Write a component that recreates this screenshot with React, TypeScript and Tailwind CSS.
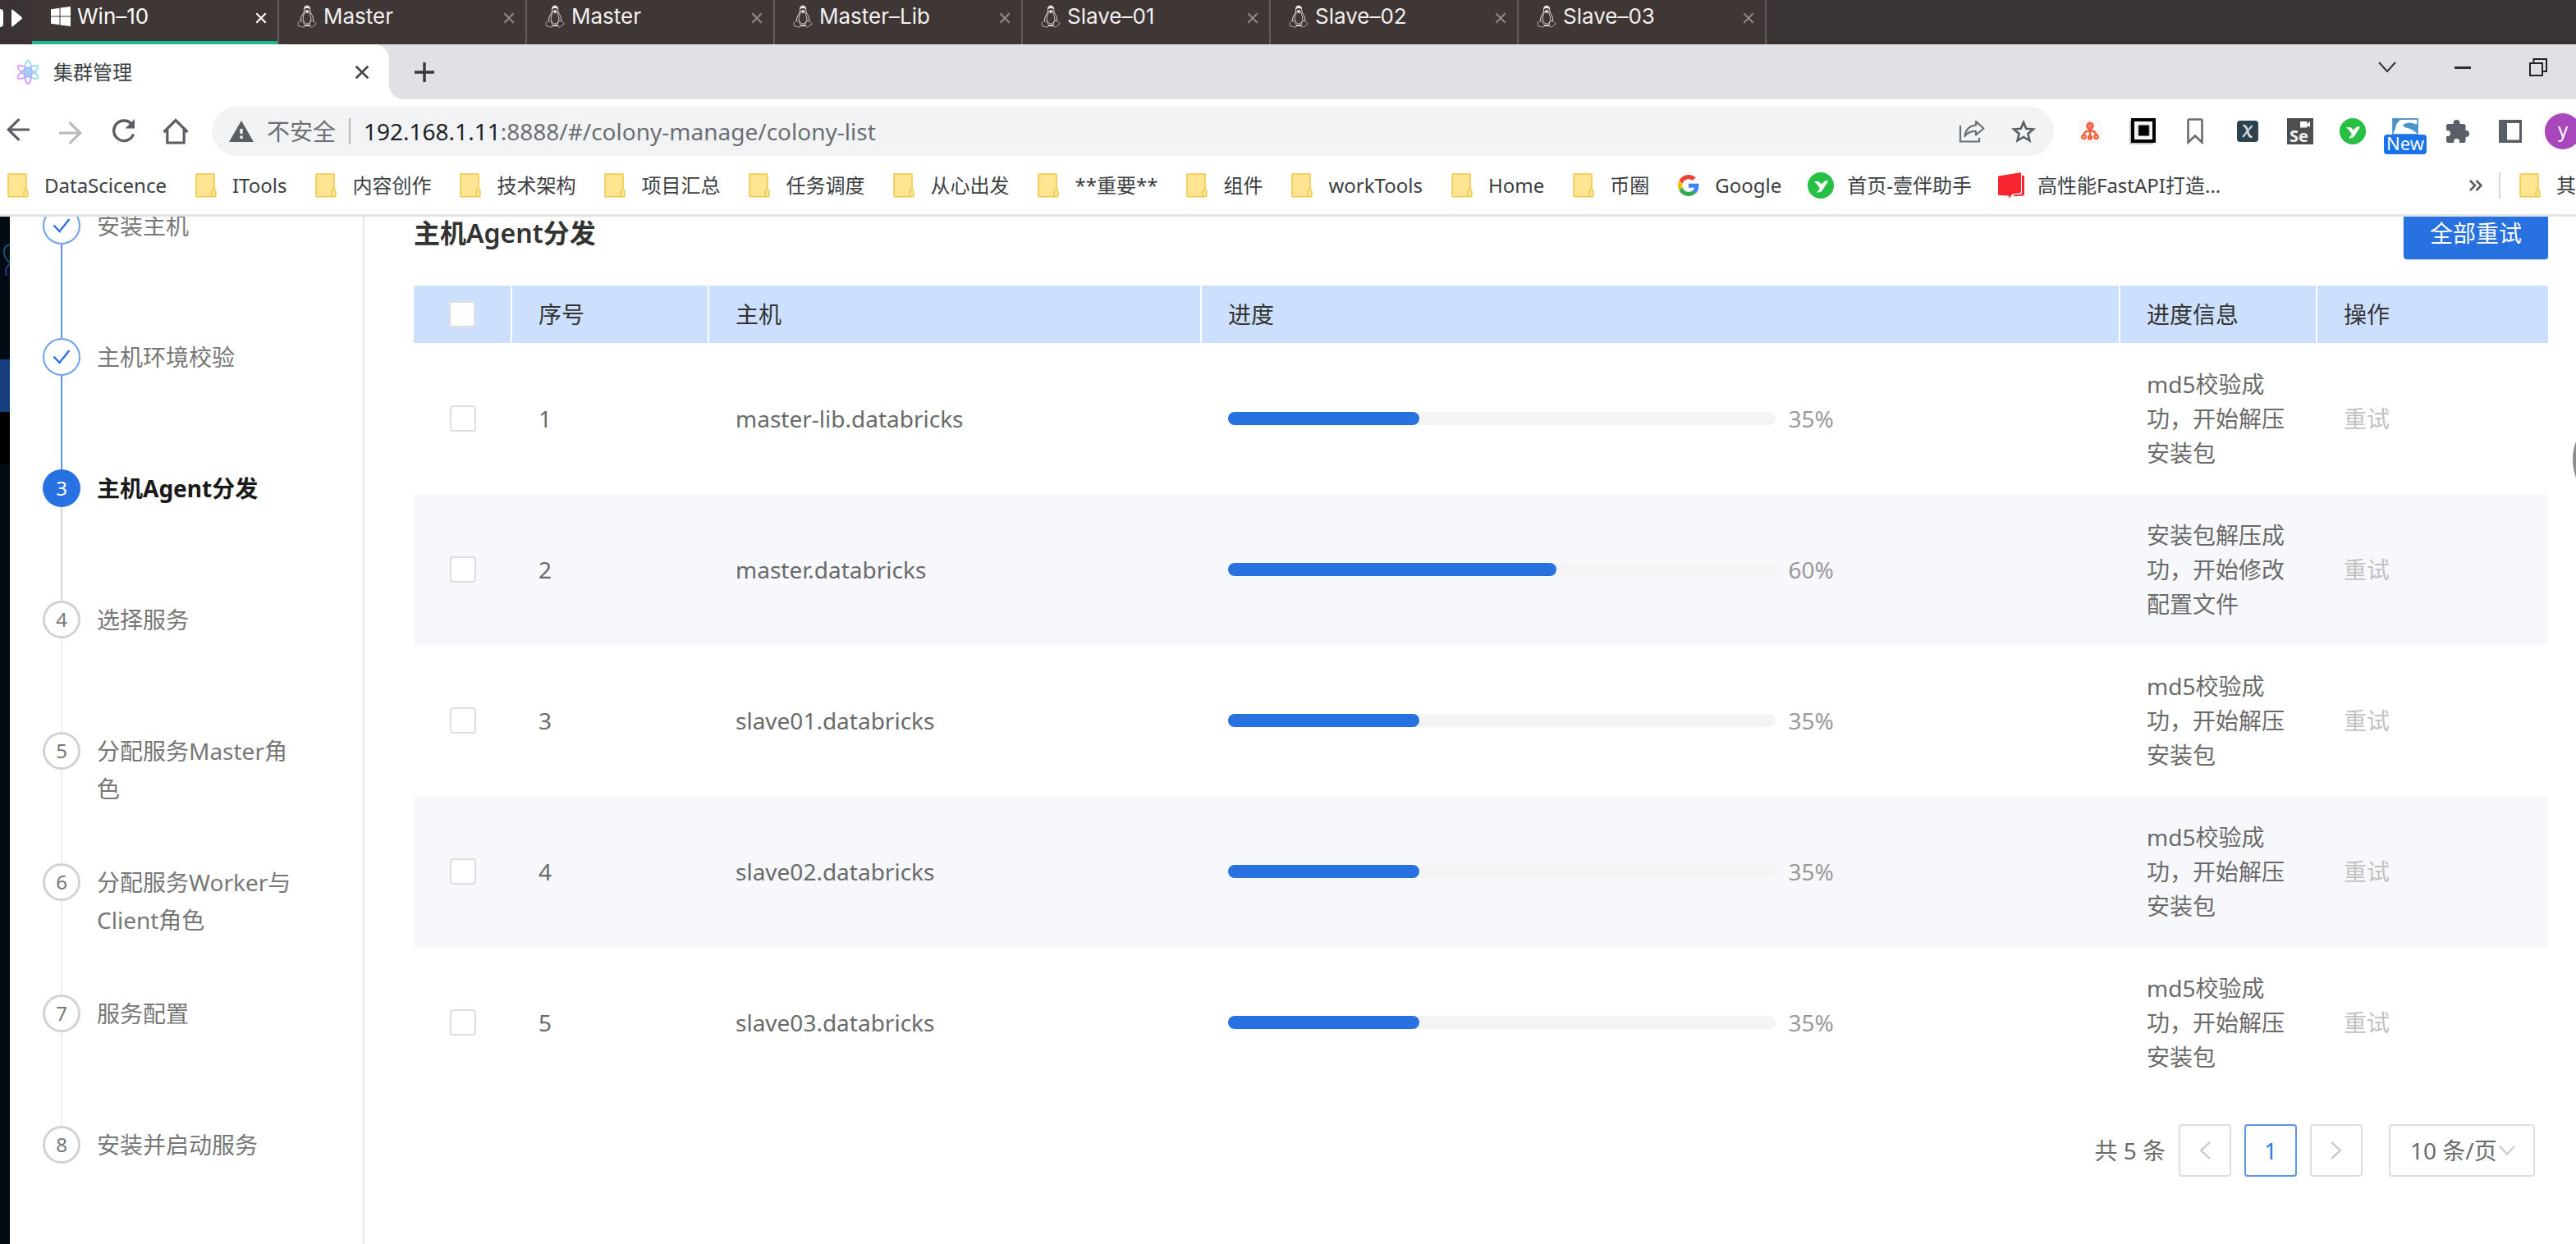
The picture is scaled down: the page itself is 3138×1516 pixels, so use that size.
import React from "react";

type IconProps = { className?: string };

const TriangleRight = () => (
  <svg width="14" height="22" viewBox="0 0 14 22" fill="#fff"><path d="M0 1.500Q0 0 1.500 .8L12.600 10Q13.600 11 12.600 12L1.500 21.200Q0 22 0 20.500z" /></svg>
);

const WindowsLogo = () => (
  <svg width="24" height="24" viewBox="0 0 24 24" fill="#fff">
    <path d="M0 3.200L10.500 1.800V11.500H0zM11.500 1.600L24 0V11.500H11.500zM0 12.500H10.500V22.200L0 20.800zM11.500 12.500H24V24L11.500 22.400z" />
  </svg>
);

const PenguinLogo = () => (
  <svg width="24" height="28" viewBox="0 0 24 28" fill="none" stroke="#f4f0f0" strokeWidth=".9" strokeLinejoin="round">
    <path d="M12 1C9.300 1 8.400 3 8.500 5.300C8.600 8 8.300 9 7 11.200C5.500 13.800 4.300 16 4.400 19.500M12 1C14.700 1 15.800 3 15.700 5.600C15.700 8.200 16.300 9.300 17.600 11.500C19.200 14.200 20 16.500 19.600 19.800" />
    <path d="M9.500 8.500C8 12.500 6.800 14.500 7.500 18.500C8.300 21 9.500 23 12 23C14.500 23 16 21.500 16.800 18.500C17.300 15 15.500 12 14.500 8.500L12 10z" strokeWidth=".8" />
    <path d="M8.900 2.500Q12 0 15.300 2.800V5Q12 2.800 8.900 5z" fill="#f4f0f0" stroke="none" />
    <path d="M9.400 7.300L12 6L14.800 7.300L12 9.300z" fill="#f4f0f0" stroke="none" />
    <path d="M4.500 19.500C3.500 20.500 1.500 20.500 1.200 21.500C.9 22.500 1.800 23.500 1 25C1.500 26.500 5 26 7 27C8.500 27.500 9.800 26 9.300 24.500L6.200 19.500zM19.500 19.600C21 20.500 22.800 22 23.200 23C22.800 24.300 20 25.200 18.600 26.500C17 27.600 15.300 26.800 15.400 25C15.300 23 15.800 20.800 16.400 19.500z" strokeOpacity=".7" />
    <path d="M9.300 25.200H15.400" strokeWidth="1.600" />
  </svg>
);

const Cross = ({ className }: IconProps) => (
  <svg className={className} viewBox="0 0 16 16" fill="none" stroke="currentColor" strokeWidth="2.400"><path d="M1.500 1.500L14.500 14.500M14.500 1.500L1.500 14.500" /></svg>
);

const AtomIcon = () => (
  <svg width="30" height="32" viewBox="0 0 30 32" fill="none" strokeWidth="1.800">
    <defs>
      <linearGradient id="atom" x1="0" y1="0" x2="0" y2="32" gradientUnits="userSpaceOnUse">
        <stop stopColor="#8be6fb" /><stop offset=".55" stopColor="#a3b4fb" /><stop offset="1" stopColor="#ee8df3" />
      </linearGradient>
    </defs>
    <g stroke="url(#atom)">
      <ellipse cx="15" cy="16" rx="4.500" ry="14" />
      <ellipse cx="15" cy="16" rx="4.500" ry="14" transform="rotate(60 15 16)" />
      <ellipse cx="15" cy="16" rx="4.500" ry="14" transform="rotate(120 15 16)" />
    </g>
    <circle cx="15" cy="16" r="3.500" fill="#a3c8fc" />
  </svg>
);

const FolderIcon = () => (
  <svg width="26" height="30" viewBox="0 0 26 30" fill="#ffe592" stroke="#f0c94f" strokeWidth="1.600">
    <path d="M1 1.500Q1 1 1.500 1H22.500Q23 1 23 1.500V19.500Q24.800 20 24.800 22V28Q24.800 28.800 24 28.800H1.800Q1 28.800 1 28z" />
    <path d="M23 19.500Q20.200 20 20.200 22.500V28.500" fill="none" />
  </svg>
);

const GoogleIcon = () => (
  <svg width="26" height="26" viewBox="0 0 48 48">
    <path fill="#ea4335" d="M24 9.500c3.500 0 6.700 1.200 9.200 3.600l6.900-6.900C35.900 2.400 30.500 0 24 0 14.600 0 6.500 5.400 2.600 13.200l8 6.200C12.400 13.700 17.700 9.500 24 9.500z" />
    <path fill="#4285f4" d="M47 24.600c0-1.600-.2-3.100-.4-4.600H24v9h12.900c-.6 3-2.300 5.500-4.800 7.200l7.700 6C44.400 38 47 31.800 47 24.600z" />
    <path fill="#fbbc05" d="M10.500 28.600c-.5-1.500-.8-3-.8-4.600s.3-3.100.8-4.600l-8-6.200C.9 16.500 0 20.100 0 24s.9 7.500 2.600 10.800z" />
    <path fill="#34a853" d="M24 48c6.500 0 11.900-2.100 15.900-5.800l-7.700-6c-2.200 1.400-4.900 2.300-8.200 2.300-6.300 0-11.600-4.200-13.500-9.900l-8 6.200C6.500 42.600 14.600 48 24 48z" />
  </svg>
);

const GreenYIcon = () => (
  <svg width="32" height="32" viewBox="0 0 32 32">
    <circle cx="16" cy="16" r="16" fill="#27c045" />
    <path d="M7.500 11.500Q13 10.500 14.500 12L17 14.500L20 11.500Q22 9.500 25 11L17.500 22.500Q15.500 25 11 24.500Q13.500 22.500 14.800 19.500L11.500 14.500Q10 12.500 7.500 11.500z" fill="#fff" />
  </svg>
);

const RedChatIcon = () => (
  <svg width="32" height="32" viewBox="0 0 32 32" fill="#f8242f">
    <path d="M1 4.500L27 .3Q28 .3 28 1.500V24Q28 25 27 25.200L17.500 26.500L13 32V28.500L1 28Q0 28 0 27V5.500Q0 4.700 1 4.500z" />
    <path d="M29 4H30.500Q32 4 32 5.500V26.500Q32 28.500 30 28.600L18.500 29.200L20 27.200L27.500 26.700Q29 26.500 29 25z" />
  </svg>
);

const BackIcon = () => (
  <svg width="28" height="28" viewBox="0 0 28 28" fill="none" stroke="currentColor" strokeWidth="3.200"><path d="M28 14H2M15.500 1.200L2.200 14L15.500 26.800" /></svg>
);

const ReloadIcon = () => (
  <svg width="30" height="30" viewBox="0 0 30 30" fill="none" stroke="#5a5e63" strokeWidth="3.400">
    <path d="M25.500 7.500A12.300 12.300 0 1 0 27.500 19.500" /><path d="M29 1V12.500H17.500z" fill="#5a5e63" stroke="none" />
  </svg>
);

const HomeIcon = () => (
  <svg width="32" height="32" viewBox="0 0 32 32" fill="none" stroke="#5a5e63" strokeWidth="3.200"><path d="M1.500 17L16 2.500L30.500 17M5.800 14V30H26.200V14" /></svg>
);

const WarningIcon = () => (
  <svg width="30" height="26" viewBox="0 0 30 26"><path d="M15 0L30 26H0z" fill="#5a5e63" /><path d="M13.300 10H16.700V16H13.300zM13.300 18.500H16.700V22H13.300z" fill="#f1f3f4" /></svg>
);

const ShareIcon = () => (
  <svg width="32" height="28" viewBox="0 0 32 28" fill="none" stroke="#6b6e73" strokeWidth="2.200">
    <path d="M2 7V26.500H25V22" /><path d="M21 2L30.500 10.500L21 18.500V14Q12 13.500 7.500 20Q9 7.500 21 6.500z" strokeLinejoin="round" />
  </svg>
);

const StarIcon = () => (
  <svg width="30" height="28" viewBox="0 0 30 28" fill="none" stroke="#5a5e63" strokeWidth="2.600"><path d="M15 3L18.300 10.800L26.800 11.500L20.400 17L22.400 25.300L15 20.900L7.600 25.300L9.600 17L3.200 11.500L11.700 10.800z" /></svg>
);

const OrgIcon = () => (
  <svg width="28" height="28" viewBox="0 0 28 28" fill="none" stroke="#f5613f" strokeWidth="2.400">
    <rect x="1" y="1" width="26" height="26" rx="4" fill="#fcfafa" stroke="#f0eeee" strokeWidth="1" />
    <circle cx="14" cy="7.500" r="3.600" fill="#f98367" /><path d="M14 11V22M14 13Q6.500 14 6.300 19M14 13Q21.500 14 21.700 19" />
    <circle cx="6.500" cy="20.800" r="2.200" /><circle cx="14" cy="21.500" r="2" /><circle cx="21.500" cy="20.800" r="2.200" />
  </svg>
);

const SquareIcon = () => (
  <svg width="32" height="32" viewBox="0 0 32 32"><path d="M0 3H29V32H0z" fill="#c4c4c4" /><path d="M2 0H32V30H2z" fill="#000" /><path d="M6 4H28V26H6z" fill="#f4f4f4" /><path d="M11 8.500H24V21.500H11z" fill="#000" /><path d="M11 8.500H24V21.500H11z" fill="none" stroke="#777" /></svg>
);

const BookmarkIcon = () => (
  <svg width="20" height="32" viewBox="0 0 20 32" fill="none" stroke="#6b6b6b" strokeWidth="2.600"><path d="M1.500 29.500V3Q1.500 1.500 3 1.500H17Q18.500 1.500 18.500 3V29.500L10 21.500z" /></svg>
);

const XpathIcon = () => (
  <svg width="26" height="26" viewBox="0 0 26 26"><rect width="26" height="26" rx="4" fill="#2c4250" /><path d="M7.500 6Q10.500 5.500 12 10L14 16Q15.500 20.500 18.500 19.500" fill="none" stroke="#e8d9cc" strokeWidth="2.600" /><path d="M18.500 6L7 20" stroke="#b9d6ee" strokeWidth="2.200" /></svg>
);

const SeleniumIcon = () => (
  <span className="relative block size-8 bg-[#4f4f4f]">
    <svg className="absolute left-4 top-1" width="14" height="8" viewBox="0 0 14 8" fill="#fff"><path d="M0 0H8.500V3L12 0V7L8.500 5V7.500H0z" /></svg>
    <span className="absolute bottom-0 left-[3px] text-[20px] font-bold leading-[20px] text-gray-100">Se</span>
  </span>
);

const NewIcon = () => (
  <span className="relative block size-8">
    <svg width="32" height="32" viewBox="0 0 32 32"><path d="M1 1H31V20H1z" fill="#fff" stroke="#5b9acb" strokeWidth="1.800" /><path d="M1 1H12Q5 4 3.500 14L1 18zM13 8Q20 3 31 8V19Q25 13 15 11z" fill="#4a93c8" /></svg>
    <span className="absolute -left-[10px] top-5 h-6 w-[52px] rounded bg-[#1a73e8] text-center text-[22px] leading-5 text-white">New</span>
  </span>
);

const PuzzleIcon = () => (
  <svg width="28" height="28" viewBox="0 0 28 28" fill="#5a5e66"><path d="M2.500 5H8.500V4A4 4 0 0 1 16.500 4V5H21Q23.500 5 23.500 7.500V13H24A4 4 0 0 1 24 21H23.500V25.500Q23.500 28 21 28H16V26.500A3.400 3.400 0 0 0 9.200 26.500V28H2.500Q0 28 0 25.500V20H1.500A3.500 3.500 0 0 0 1.500 13H0V7.500Q0 5 2.500 5z" /></svg>
);

const PanelIcon = () => (
  <svg width="28" height="28" viewBox="0 0 28 28"><path d="M0 0H28V28H0z" fill="#5a5e66" /><path d="M10 4H25V24.500H10z" fill="#fff" /></svg>
);

const ChevronDown = ({ className }: IconProps) => (
  <svg className={className} viewBox="0 0 22 14" fill="none" stroke="currentColor" strokeWidth="2"><path d="M1 1L11 12L21 1" /></svg>
);

const sessions = ["Master", "Master", "Master–Lib", "Slave–01", "Slave–02", "Slave–03"];

const bookmarks: { label: string; icon: React.ReactNode }[] = [
  ...["DataScicence", "ITools", "内容创作", "技术架构", "项目汇总", "任务调度", "从心出发", "**重要**", "组件", "workTools", "Home", "币圈"].map((label) => ({ label, icon: <FolderIcon /> })),
  { label: "Google", icon: <GoogleIcon /> },
  { label: "首页-壹伴助手", icon: <GreenYIcon /> },
  { label: "高性能FastAPI打造...", icon: <RedChatIcon /> },
];

const extensions: { name: string; icon: React.ReactNode }[] = [
  { name: "Sitemap", icon: <OrgIcon /> },
  { name: "Frame", icon: <SquareIcon /> },
  { name: "Reading list", icon: <BookmarkIcon /> },
  { name: "XPath", icon: <XpathIcon /> },
  { name: "Selenium", icon: <SeleniumIcon /> },
  { name: "Assistant", icon: <GreenYIcon /> },
  { name: "Capture", icon: <NewIcon /> },
  { name: "Extensions", icon: <PuzzleIcon /> },
  { name: "Side panel", icon: <PanelIcon /> },
];

const steps = ["安装主机", "主机环境校验", "主机Agent分发", "选择服务", "分配服务Master角色", "分配服务Worker与Client角色", "服务配置", "安装并启动服务"];
const CURRENT = 2;

const hosts = [
  { name: "master-lib.databricks", percent: 35, info: "md5校验成功，开始解压安装包" },
  { name: "master.databricks", percent: 60, info: "安装包解压成功，开始修改配置文件" },
  { name: "slave01.databricks", percent: 35, info: "md5校验成功，开始解压安装包" },
  { name: "slave02.databricks", percent: 35, info: "md5校验成功，开始解压安装包" },
  { name: "slave03.databricks", percent: 35, info: "md5校验成功，开始解压安装包" },
];

function SessionBar() {
  return (
    <div className="flex h-[54px] shrink-0 bg-[#3a3333] font-['Inter',sans-serif] text-[26px] leading-10 text-[#f4f0f0]">
      <div className="flex w-[39px] shrink-0 items-start gap-[10px] pt-[11px]">
        <span className="h-[22px] w-1 rounded-r-sm bg-white" />
        <TriangleRight />
      </div>
      {["Win–10", ...sessions].map((label, i) => (
        <div key={i} className={i === 0 ? "flex w-[299px] items-start border-b-4 border-[#1fb693] bg-[#3f3636] pl-[23px] pr-[13px] text-white" : "flex w-[302px] items-start rounded-br-sm border-l-2 border-[#655e5e] bg-[#3f3636] pl-[22px] pr-[13px]"}>
          <button className="flex flex-1 items-center gap-2 text-left">
            {i === 0 ? <WindowsLogo /> : <PenguinLogo />}
            {label}
          </button>
          <button aria-label={`Close ${label}`} className={i === 0 ? "pt-[15px] text-white" : "pt-[15px] text-[#8f8888]"}>
            <Cross className="size-[14px]" />
          </button>
        </div>
      ))}
      <div className="w-0.5 bg-[#655e5e]" />
    </div>
  );
}

function TabStrip() {
  return (
    <div className="flex h-[67px] shrink-0 items-stretch bg-[#dfe1e5]">
      <div className="flex w-[474px] items-center rounded-tr-[18px] bg-white pl-[19px] pr-6 text-2xl leading-8 text-[#3c4043]">
        <AtomIcon />
        <span className="ml-4 flex-1">集群管理</span>
        <button aria-label="关闭标签页" className="text-[#45494d]"><Cross className="size-[18px]" /></button>
      </div>
      <div className="flex w-[86px] bg-white">
        <button aria-label="新标签页" className="flex w-full items-center justify-center rounded-bl-[18px] bg-[#dfe1e5]">
          <svg width="24" height="24" viewBox="0 0 24 24" stroke="#35393d" strokeWidth="3.400"><path d="M12 0V24M0 12H24" /></svg>
        </button>
      </div>
      <div className="ml-auto flex pb-[11px] text-[#333]">
        <button aria-label="搜索标签页" className="flex w-[92px] items-center justify-center"><ChevronDown className="h-[14px] w-[22px]" /></button>
        <button aria-label="最小化" className="flex w-[92px] items-center justify-center"><span className="h-[3px] w-5 bg-[#333]" /></button>
        <button aria-label="还原" className="flex w-[92px] items-center justify-center">
          <svg width="22" height="22" viewBox="0 0 22 22" fill="none" stroke="#222" strokeWidth="2"><path d="M1 6H16V21H1zM5.500 5.500V1H21V16H16.500" /></svg>
        </button>
      </div>
    </div>
  );
}

function Toolbar() {
  return (
    <div className="flex h-[78px] shrink-0 items-center overflow-hidden bg-white">
      <div className="mr-3 flex text-[#5a5e63]">
        <button aria-label="后退" className="flex w-[54px] justify-center pr-[10px]"><BackIcon /></button>
        <button aria-label="前进" className="flex w-16 rotate-180 justify-center text-[#b8babd]"><BackIcon /></button>
        <button aria-label="重新加载" className="flex w-16 justify-center"><ReloadIcon /></button>
        <button aria-label="主页" className="flex w-16 justify-center"><HomeIcon /></button>
      </div>
      <div className="flex h-[60px] flex-1 items-center rounded-full bg-[#f1f3f4] pl-[21px] pr-[22px] text-[28px] leading-10 text-[#6b6f74]">
        <WarningIcon />
        <span className="ml-4">不安全</span>
        <span className="mx-4 h-8 w-0.5 bg-[#b4b6b9]" />
        <a href="#/colony-manage/colony-list" className="flex-1">
          <span className="text-[#202124]">192.168.1.11</span>:8888/#/colony-manage/colony-list
        </a>
        <button aria-label="分享"><ShareIcon /></button>
        <button aria-label="收藏" className="ml-8"><StarIcon /></button>
      </div>
      <div className="-mr-4 ml-3 flex">
        {extensions.map((e) => (
          <button key={e.name} aria-label={e.name} className="flex h-11 w-16 items-center justify-center">{e.icon}</button>
        ))}
        <button aria-label="个人资料" className="flex w-16 justify-center">
          <span className="size-11 rounded-full bg-[#ab47bc] text-[24px] leading-10 text-white">y</span>
        </button>
      </div>
    </div>
  );
}

function BookmarksBar() {
  return (
    <nav aria-label="书签" className="flex h-[65px] shrink-0 items-center overflow-hidden border-b-[3px] border-[#e4e4e4] bg-white pb-2 pl-[6px] text-2xl leading-8 text-[#3c4043]">
      <div className="flex flex-1 gap-8">
        {bookmarks.map((b) => (
          <a key={b.label} href="#" className="flex items-center gap-4 whitespace-nowrap">
            <span className="flex w-8 justify-center">{b.icon}</span>
            {b.label}
          </a>
        ))}
      </div>
      <button aria-label="更多书签" className="text-[#5a5e63]">
        <svg width="16" height="14" viewBox="0 0 16 14" fill="none" stroke="currentColor" strokeWidth="2.600"><path d="M1 1L7 7L1 13M8.500 1L14.500 7L8.500 13" /></svg>
      </button>
      <span className="mx-5 h-8 w-0.5 bg-[#d5d7da]" />
      <a href="#" className="flex items-center gap-4 whitespace-nowrap">
        <span className="flex w-8 shrink-0 justify-center"><FolderIcon /></span>
        其
      </a>
    </nav>
  );
}

function Steps() {
  return (
    <ol className="-mt-3 w-[430px] shrink-0 pl-10 pr-[72px] text-[28px] leading-[46px] text-[#777]">
      {steps.map((label, i) => {
        const done = i < CURRENT;
        const active = i === CURRENT;
        return (
          <li key={label} className="flex min-h-[160px] gap-5" aria-current={active ? "step" : undefined}>
            <div className="flex w-[46px] shrink-0 flex-col items-center">
              <span
                className={
                  done
                    ? "flex size-[46px] items-center justify-center rounded-full border-2 border-[#6ea0ee] text-[#2a72e0]"
                    : active
                      ? "flex size-[46px] items-center justify-center rounded-full bg-[#2871e0] text-2xl text-white"
                      : "flex size-[46px] items-center justify-center rounded-full border-[3px] border-[#d2d2d2] text-2xl text-[#777]"
                }
              >
                {done ? <svg width="22" height="20" viewBox="0 0 22 20" fill="none" stroke="currentColor" strokeWidth="2.400"><path d="M1.500 9.500L8.500 17L20.500 2" /></svg> : i + 1}
              </span>
              {i < steps.length - 1 && <span className={done ? "w-0.5 flex-1 bg-[#5c94ea]" : active ? "w-0.5 flex-1 bg-[#d6d6d6]" : "w-0.5 flex-1 bg-[#efefef]"} />}
            </div>
            <span className={active ? "flex-1 font-bold text-[#1a1a1a]" : "flex-1"}>{label}</span>
          </li>
        );
      })}
    </ol>
  );
}

const checkboxClass = "block mx-auto size-8 appearance-none rounded border-2 border-[#dedede] bg-white";
const thClass = "border-r-2 border-white px-8 py-[14px] text-left font-normal";

function HostTable() {
  return (
    <table className="mt-7 w-full table-fixed border-separate border-spacing-0 text-[28px] leading-[42px] text-[#6a6a6a]">
      <colgroup>
        <col className="w-[120px]" /><col className="w-[240px]" /><col className="w-[600px]" /><col /><col className="w-[240px]" /><col className="w-[281px]" />
      </colgroup>
      <thead>
        <tr className="bg-[#cce0fe] text-[#333]">
          <th className="rounded-tl border-r-2 border-white"><input type="checkbox" aria-label="全选" className={checkboxClass} /></th>
          <th className={thClass}>序号</th>
          <th className={thClass}>主机</th>
          <th className={thClass}>进度</th>
          <th className={thClass}>进度信息</th>
          <th className="rounded-tr px-8 py-[14px] text-left font-normal">操作</th>
        </tr>
      </thead>
      <tbody>
        {hosts.map((h, i) => (
          <tr key={h.name} className="h-[184px] even:bg-[#f6f8fc]">
            <td><input type="checkbox" aria-label={h.name} className={checkboxClass} /></td>
            <td className="px-8">{i + 1}</td>
            <td className="px-8">{h.name}</td>
            <td className="px-8">
              <div className="flex w-[70%] items-center gap-4">
                <div role="progressbar" aria-valuenow={h.percent} aria-label={h.name} className="h-4 flex-1 rounded-full bg-[#f4f4f4]">
                  <div className="h-full rounded-full bg-[#2871e0]" style={{ width: `${h.percent}%` }} />
                </div>
                <span className="w-14 text-[#999]">{h.percent}%</span>
              </div>
            </td>
            <td className="px-8">{h.info}</td>
            <td className="px-8"><button disabled className="text-[#c2c2c2]">重试</button></td>
          </tr>
        ))}
      </tbody>
    </table>
  );
}

function Pagination() {
  const box = "flex size-16 items-center justify-center rounded border-2";
  return (
    <div className="mr-4 mt-8 flex items-center justify-end gap-4 text-[28px] leading-10 text-[#6a6a6a]">
      <span>共 5 条</span>
      <button aria-label="上一页" disabled className={`${box} border-[#dedede] text-[#c4c4c4]`}><ChevronDown className="h-[14px] w-[22px] rotate-90" /></button>
      <button aria-current="page" className={`${box} border-[#5c94ea] text-[#2f7bea]`}>1</button>
      <button aria-label="下一页" disabled className={`${box} border-[#dedede] text-[#c4c4c4]`}><ChevronDown className="h-[14px] w-[22px] -rotate-90" /></button>
      <div className="relative ml-4">
        <select aria-label="每页条数" className="h-16 w-[178px] appearance-none rounded border-2 border-[#dedede] bg-white pl-6">
          <option>10 条/页</option>
        </select>
        <ChevronDown className="pointer-events-none absolute right-6 top-[25px] h-[14px] w-5 text-[#c4c4c4]" />
      </div>
    </div>
  );
}

export default function App() {
  return (
    <div className="flex h-screen flex-col overflow-hidden bg-white font-['Noto_Sans','Noto_Sans_CJK_SC',sans-serif]">
      <SessionBar />
      <TabStrip />
      <Toolbar />
      <BookmarksBar />
      <div className="relative flex min-h-0 flex-1 overflow-hidden">
        <div className="flex w-3 shrink-0 flex-col bg-[#020a14]">
          <svg width="12" height="174" viewBox="0 0 12 174" fill="none" strokeWidth="2"><path d="M12 34Q4 36 5 44T12 56" stroke="#0d5c74" /><path d="M12 58Q5 62 8 72" stroke="#33348f" /></svg>
          <div className="h-16 bg-[#173f80]" />
          <div className="h-16 bg-black" />
        </div>
        <Steps />
        <main className="-mt-3 min-w-0 flex-1 border-l-2 border-[#e8e8e8] pl-[60px] pr-[34px]">
          <div className="flex items-center justify-between pb-1">
            <h1 className="text-[32px] font-semibold leading-[64px] text-[#333]">主机Agent分发</h1>
            <button className="h-16 rounded bg-[#2871e0] px-8 text-[28px] text-white shadow-sm">全部重试</button>
          </div>
          <HostTable />
          <Pagination />
        </main>
        <div className="absolute left-full top-[232px] -ml-1 size-32 rounded-full bg-[#8c8c8c]" />
      </div>
    </div>
  );
}
